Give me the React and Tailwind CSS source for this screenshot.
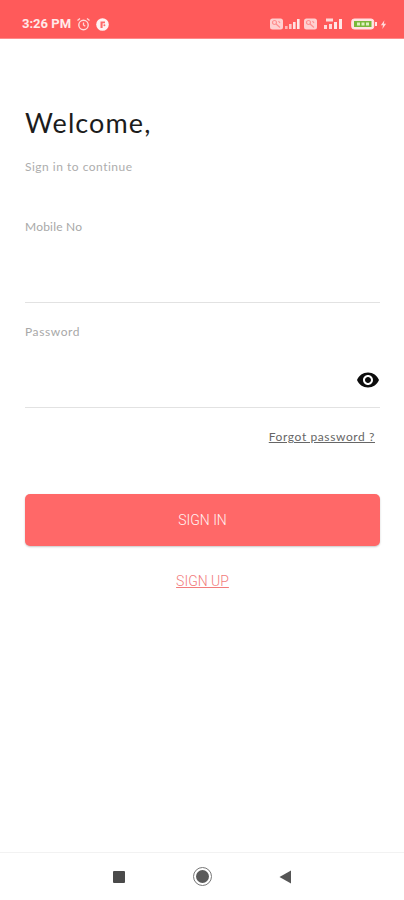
import React from "react";

function Signal({ small }) {
  return (
    <svg width={small ? 22 : 15} height="12" viewBox={small ? "0 0 22 12" : "0 0 15 12"} className="shrink-0">
      {small ? (
        <>
          <rect x="1" y="7" width="3" height="4" fill="#ffd9d9" />
          <rect x="6" y="6" width="3" height="5" fill="#ffd9d9" />
          <rect x="11" y="4" width="3" height="7" fill="#ffe6e6" />
          <rect x="16" y="1" width="3" height="10" fill="#ffe6e6" />
          <rect x="3" y="0.5" width="7" height="3" fill="#ffd9d9" />
        </>
      ) : (
        <>
          <rect x="0" y="8" width="2.6" height="3" fill="#ffb5b5" />
          <rect x="4" y="6" width="2.6" height="5" fill="#ffc9c9" />
          <rect x="8" y="4" width="2.6" height="7" fill="#ffe0e0" />
          <rect x="12" y="1" width="2.6" height="10" fill="#ffe6e6" />
        </>
      )}
    </svg>
  );
}

function Volte() {
  return (
    <svg width="13" height="12" viewBox="0 0 13 12" className="shrink-0">
      <rect x="0" y="0.5" width="13" height="11" rx="2.5" fill="#ffd0d0" />
      <circle cx="4.5" cy="4.5" r="2" fill="none" stroke="#ff8f8f" strokeWidth="1.2" />
      <path d="M6 6l4 3.5M8.5 3l1.5 2" stroke="#ff8f8f" strokeWidth="1.2" fill="none" />
    </svg>
  );
}

export default function App() {
  return (
    <div className="w-[404px] h-[900px] bg-white flex flex-col overflow-hidden font-['Lato','Liberation_Sans',sans-serif]">
      <header className="h-[39px] shrink-0 bg-[#ff5a5a] flex items-center justify-between pl-[22px] pr-[17px] pt-[10px] border-b border-[#ff8a8a]">
        <div className="flex items-center">
          <span className="text-[13px] font-bold text-[#ffe9e9] font-['Roboto',sans-serif]">3:26 PM</span>
          <svg width="15" height="15" viewBox="0 0 15 15" className="ml-[5px]">
            <circle cx="7.5" cy="8" r="4.7" fill="none" stroke="#ffd9d9" strokeWidth="1.4" />
            <path d="M7.5 5.5V8l1.8 1.2M1.5 3.6L4 1.6M13.5 3.6L11 1.6" fill="none" stroke="#ffd9d9" strokeWidth="1.3" />
          </svg>
          <svg width="13" height="13" viewBox="0 0 13 13" className="ml-[5px]">
            <circle cx="6.5" cy="6.5" r="6.3" fill="#fff2f2" />
            <path d="M4.5 10V3.5H9V5.3H6.6V10Z" fill="#ff6a6a" />
            <circle cx="8.4" cy="7.2" r="1" fill="#ff6a6a" />
          </svg>
        </div>
        <div className="flex items-center">
          <Volte />
          <span className="w-[2px]" />
          <Signal />
          <span className="w-[4px]" />
          <Volte />
          <span className="w-[6px]" />
          <Signal small />
          <svg width="26" height="12" viewBox="0 0 26 12" className="ml-[6px] shrink-0">
            <rect x="0.7" y="1" width="22" height="10" rx="2.5" fill="#ffe3e3" stroke="#ffe3e3" strokeWidth="1" />
            <rect x="3" y="3" width="17.5" height="6" fill="#79b93a" />
            <path d="M6 6h12" stroke="#dff0c0" strokeWidth="3" strokeDasharray="3 1.5" />
            <rect x="24" y="4" width="2" height="4" fill="#ffe3e3" />
          </svg>
          <svg width="7" height="11" viewBox="0 0 8 11" className="ml-[3px] shrink-0">
            <path d="M5 0.5L1 6.3H3.4L2.7 10.5L7 4.5H4.4Z" fill="#ffd9d9" />
          </svg>
        </div>
      </header>

      <main className="flex-1 pl-[25px] pr-[24px]">
        <h1 className="mt-[66px] text-[27px] leading-[36px] font-normal text-[#1c1c1c] tracking-[1.1px]">Welcome,</h1>
        <p className="mt-[18px] text-[12px] leading-[16px] font-normal text-[#adadad] tracking-[0.5px]">Sign in to continue</p>

        <label className="block mt-[44px] text-[12px] leading-[16px] font-normal text-[#a8a8a8] tracking-[0.2px]">Mobile No</label>
        <div className="h-[68px] border-b border-[#e2e2e2]" />

        <label className="block mt-[21px] text-[12px] leading-[16px] font-normal text-[#a8a8a8] tracking-[0.6px]">Password</label>
        <div className="h-[68px] border-b border-[#e2e2e2] flex items-center justify-end pt-[12px]">
          <svg width="24" height="24" viewBox="0 0 24 24" className="shrink-0">
            <path fill="#0d0d0d" d="M12 4.5C7 4.5 2.73 7.61 1 12c1.73 4.39 6 7.5 11 7.5s9.27-3.11 11-7.5c-1.73-4.39-6-7.5-11-7.5zM12 17c-2.76 0-5-2.24-5-5s2.24-5 5-5 5 2.24 5 5-2.24 5-5 5zm0-8c-1.66 0-3 1.34-3 3s1.34 3 3 3 3-1.34 3-3-1.34-3-3-3z" />
          </svg>
        </div>

        <div className="flex justify-end mt-[21px] pr-[5px]">
          <a className="text-[12px] leading-[16px] font-normal text-[#666666] underline tracking-[0.6px]">Forgot password ?</a>
        </div>

        <button className="mt-[49px] w-full h-[52px] rounded-[5px] bg-[#ff6868] text-[#fff3f3] text-[14px] font-light shadow-[0_1px_2px_rgba(0,0,0,0.22)] font-['Roboto',sans-serif]">SIGN IN</button>

        <div className="mt-[26px] flex justify-center">
          <a className="text-[14px] leading-[18px] font-light text-[#f27c7c] underline font-['Roboto',sans-serif]">SIGN UP</a>
        </div>
      </main>

      <nav className="h-[48px] shrink-0 border-t border-[#f2f2f2] flex items-center">
        <div className="ml-[113px] w-[12px] h-[12px] bg-[#4a4a4a] rounded-[1px]" />
        <div className="ml-[68px] w-[19px] h-[19px] rounded-full border-[1.5px] border-[#777777] flex items-center justify-center">
          <div className="w-[13px] h-[13px] rounded-full bg-[#5a5a5a]" />
        </div>
        <svg width="12" height="14" viewBox="0 0 12 14" className="ml-[67px]">
          <path d="M12 0.5V13.5L0.5 7Z" fill="#555555" />
        </svg>
      </nav>
    </div>
  );
}
